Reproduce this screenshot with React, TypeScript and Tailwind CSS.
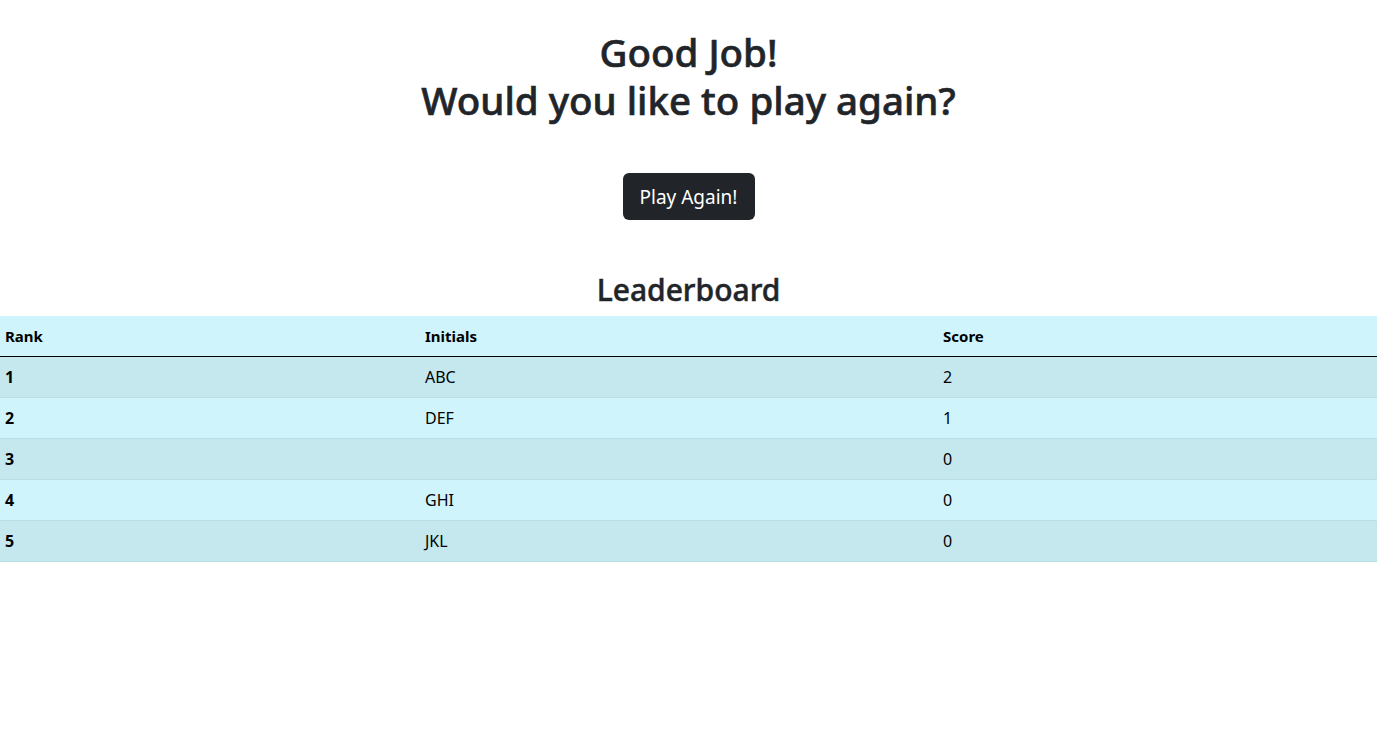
import React from "react"

const rows = [
  { rank: 1, initials: "ABC", score: 2 },
  { rank: 2, initials: "DEF", score: 1 },
  { rank: 3, initials: "", score: 0 },
  { rank: 4, initials: "GHI", score: 0 },
  { rank: 5, initials: "JKL", score: 0 },
]

export default function App() {
  return (
    <div className="min-h-screen bg-white text-[#212529] font-['Noto_Sans',sans-serif]">
      <div className="flex flex-col items-center pt-[28px]">
        <h1 className="text-[38.5px] leading-[48px] font-medium text-center [-webkit-text-stroke:0.6px_#212529]">
          <span className="block">Good Job!</span>
          <span className="block">Would you like to play again?</span>
        </h1>
        <button className="mt-[49px] h-[47px] w-[132px] rounded-md bg-[#212529] text-white text-[19px] leading-[30px]">
          Play Again!
        </button>
        <h2 className="mt-[51px] mb-[7px] text-[30px] leading-[38px] font-medium [-webkit-text-stroke:0.5px_#212529]">
          Leaderboard
        </h2>
      </div>
      <table className="w-full border-collapse text-black text-[16px] leading-[24px]">
        <thead>
          <tr className="bg-[#cff4fc]">
            <th className="w-[419px] h-[40px] px-[5px] text-left text-[15px] font-bold border-b border-black">Rank</th>
            <th className="w-[518px] px-[6px] text-left text-[15px] font-bold border-b border-black">Initials</th>
            <th className="px-[6px] text-left text-[15px] font-bold border-b border-black">Score</th>
          </tr>
        </thead>
        <tbody>
          {rows.map((r, i) => (
            <tr key={r.rank} className={i % 2 === 0 ? "bg-[#c5e8ef]" : "bg-[#cff4fc]"}>
              <td className="h-[41px] px-[5px] font-bold border-b border-[#badce3]">{r.rank}</td>
              <td className="px-[6px] border-b border-[#badce3]">{r.initials}</td>
              <td className="px-[6px] border-b border-[#badce3]">{r.score}</td>
            </tr>
          ))}
        </tbody>
      </table>
    </div>
  )
}
